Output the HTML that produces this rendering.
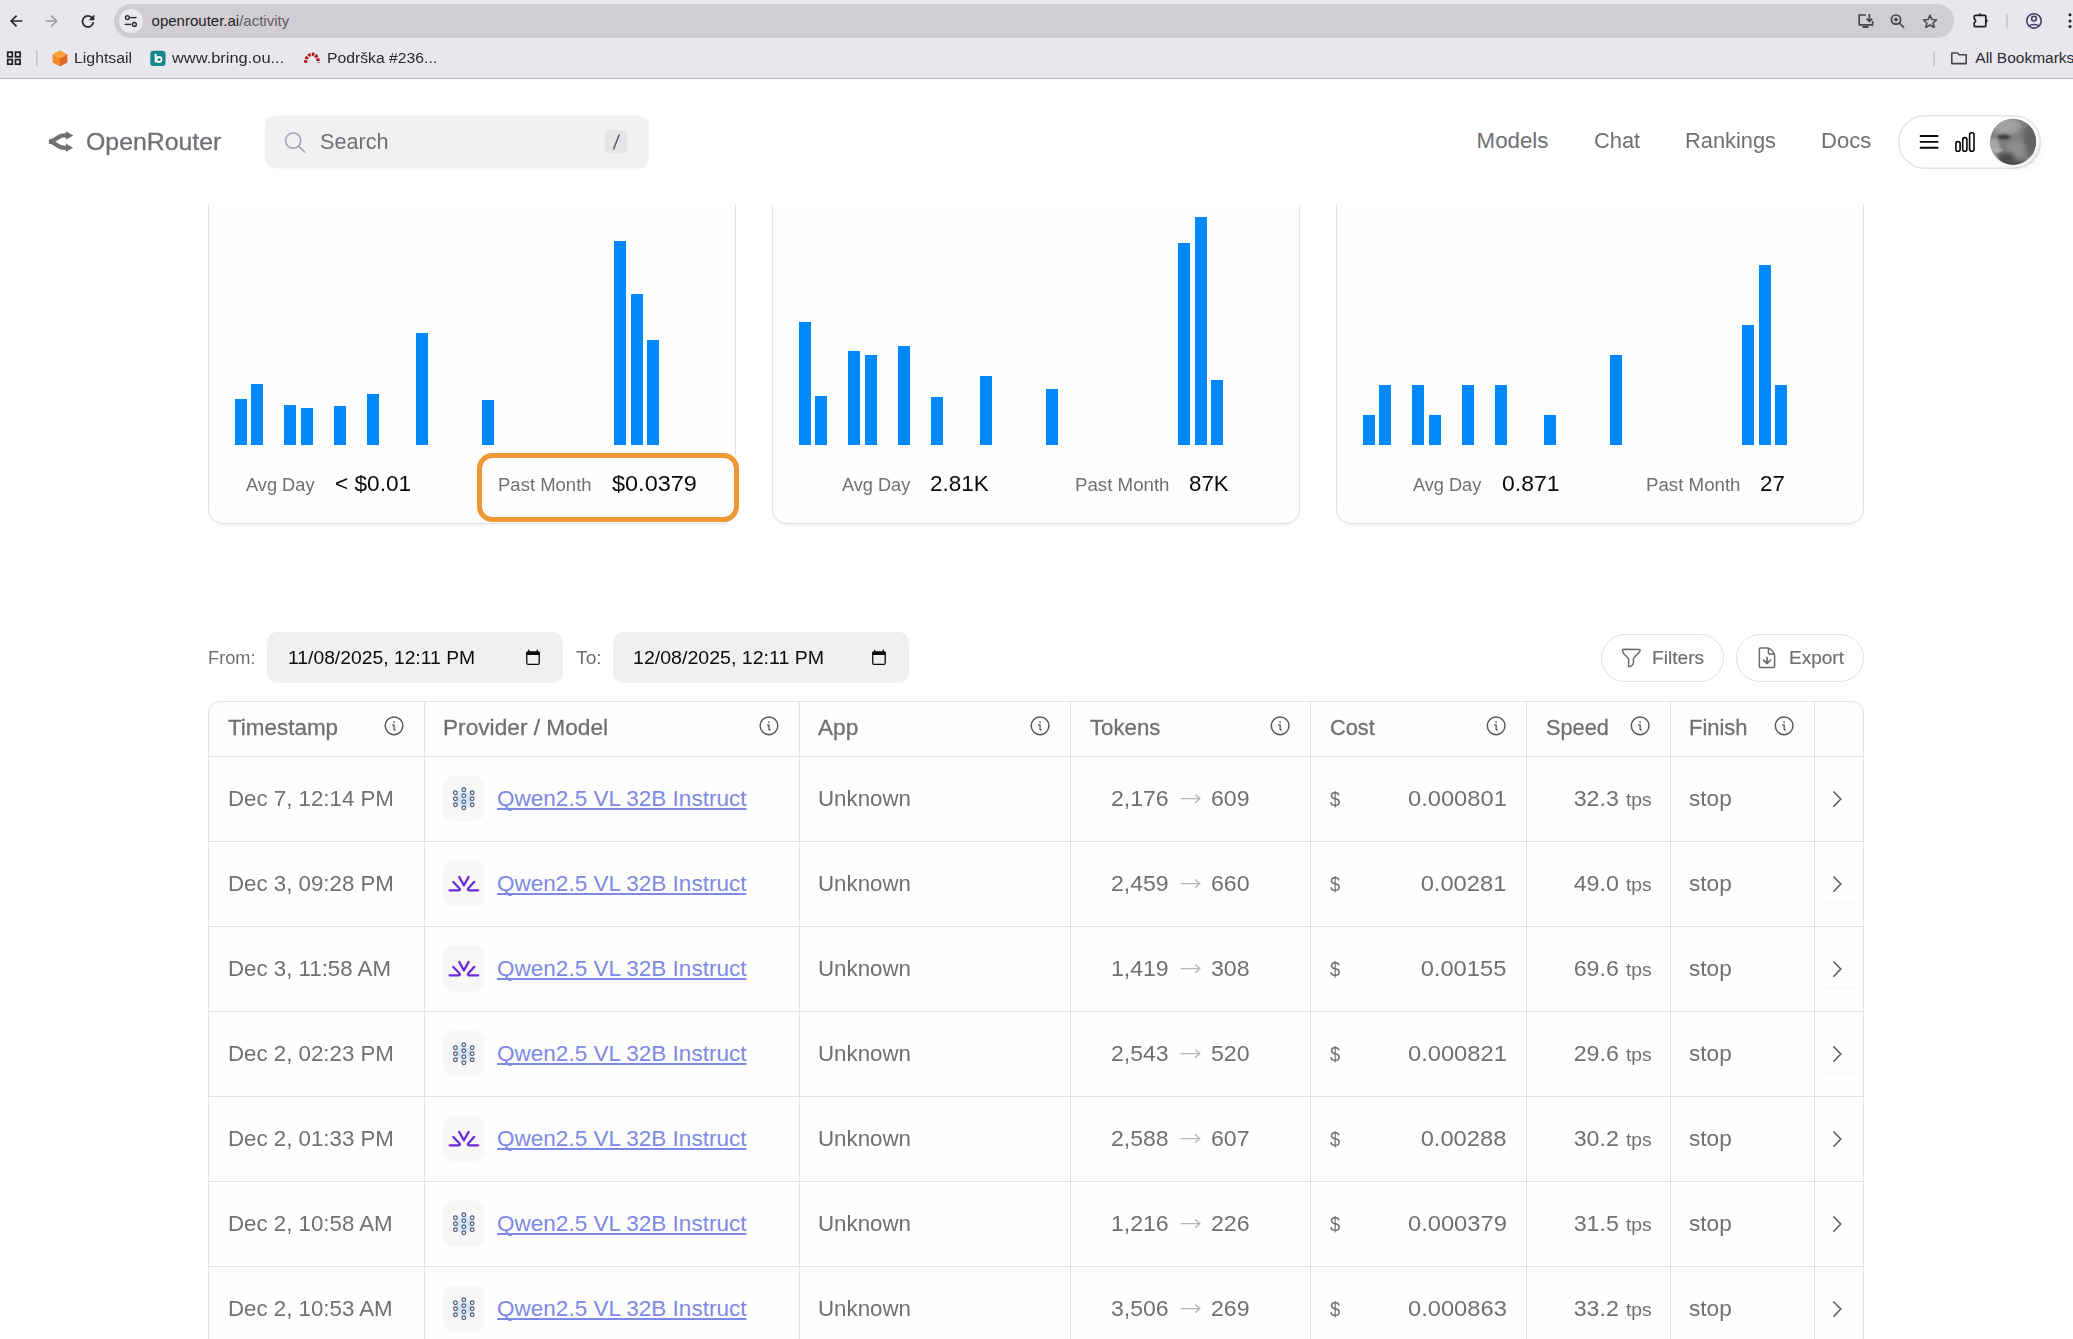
<!DOCTYPE html>
<html><head><meta charset="utf-8"><title>OpenRouter Activity</title>
<style>
*{box-sizing:border-box;margin:0;padding:0}
html,body{width:2073px;height:1339px;overflow:hidden;background:#FFFFFF;font-family:"Liberation Sans",sans-serif}
body{position:relative}
.a{position:absolute;white-space:pre;line-height:1}
</style></head><body>
<div style="position:absolute;left:208px;top:140px;width:528px;height:384px;border:1px solid #E2E2E4;border-radius:15px;background:#FEFEFE;box-shadow:0 1.5px 2px rgba(0,0,0,0.04)"></div>
<div style="position:absolute;left:234.50px;top:399.0px;width:12px;height:45.8px;background:#0088FF"></div>
<div style="position:absolute;left:251.00px;top:383.8px;width:12px;height:61.0px;background:#0088FF"></div>
<div style="position:absolute;left:284.00px;top:405.0px;width:12px;height:39.8px;background:#0088FF"></div>
<div style="position:absolute;left:300.50px;top:408.0px;width:12px;height:36.8px;background:#0088FF"></div>
<div style="position:absolute;left:333.50px;top:405.6px;width:12px;height:39.2px;background:#0088FF"></div>
<div style="position:absolute;left:366.50px;top:394.3px;width:12px;height:50.5px;background:#0088FF"></div>
<div style="position:absolute;left:416.00px;top:333.0px;width:12px;height:111.8px;background:#0088FF"></div>
<div style="position:absolute;left:482.00px;top:400.0px;width:12px;height:44.8px;background:#0088FF"></div>
<div style="position:absolute;left:614.00px;top:240.9px;width:12px;height:203.9px;background:#0088FF"></div>
<div style="position:absolute;left:630.50px;top:294.0px;width:12px;height:150.8px;background:#0088FF"></div>
<div style="position:absolute;left:647.00px;top:340.4px;width:12px;height:104.4px;background:#0088FF"></div>
<div class="a" style="left:245.80px;top:476.14px;font-size:18.3px;color:#707074;transform:scaleX(0.9961);transform-origin:0 0;">Avg Day</div>
<div class="a" style="left:334.50px;top:472.70px;font-size:22px;color:#09090B;transform:scaleX(1.0295);transform-origin:0 0;">&lt; $0.01</div>
<div class="a" style="left:497.60px;top:476.14px;font-size:18.3px;color:#707074;transform:scaleX(1.0122);transform-origin:0 0;">Past Month</div>
<div class="a" style="left:611.50px;top:472.70px;font-size:22px;color:#09090B;transform:scaleX(1.0675);transform-origin:0 0;">$0.0379</div>
<div style="position:absolute;left:772px;top:140px;width:528px;height:384px;border:1px solid #E2E2E4;border-radius:15px;background:#FEFEFE;box-shadow:0 1.5px 2px rgba(0,0,0,0.04)"></div>
<div style="position:absolute;left:798.60px;top:321.8px;width:12px;height:123.0px;background:#0088FF"></div>
<div style="position:absolute;left:815.10px;top:396.0px;width:12px;height:48.8px;background:#0088FF"></div>
<div style="position:absolute;left:848.10px;top:351.3px;width:12px;height:93.5px;background:#0088FF"></div>
<div style="position:absolute;left:864.60px;top:355.0px;width:12px;height:89.8px;background:#0088FF"></div>
<div style="position:absolute;left:897.60px;top:346.0px;width:12px;height:98.8px;background:#0088FF"></div>
<div style="position:absolute;left:930.60px;top:396.6px;width:12px;height:48.2px;background:#0088FF"></div>
<div style="position:absolute;left:980.10px;top:375.8px;width:12px;height:69.0px;background:#0088FF"></div>
<div style="position:absolute;left:1046.10px;top:389.3px;width:12px;height:55.5px;background:#0088FF"></div>
<div style="position:absolute;left:1178.10px;top:243.2px;width:12px;height:201.6px;background:#0088FF"></div>
<div style="position:absolute;left:1194.60px;top:216.5px;width:12px;height:228.3px;background:#0088FF"></div>
<div style="position:absolute;left:1211.10px;top:380.4px;width:12px;height:64.4px;background:#0088FF"></div>
<div class="a" style="left:841.80px;top:476.14px;font-size:18.3px;color:#707074;transform:scaleX(0.9918);transform-origin:0 0;">Avg Day</div>
<div class="a" style="left:930.20px;top:472.70px;font-size:22px;color:#09090B;transform:scaleX(1.0226);transform-origin:0 0;">2.81K</div>
<div class="a" style="left:1074.70px;top:476.14px;font-size:18.3px;color:#707074;transform:scaleX(1.0220);transform-origin:0 0;">Past Month</div>
<div class="a" style="left:1189.00px;top:472.70px;font-size:22px;color:#09090B;transform:scaleX(1.0139);transform-origin:0 0;">87K</div>
<div style="position:absolute;left:1336px;top:140px;width:528px;height:384px;border:1px solid #E2E2E4;border-radius:15px;background:#FEFEFE;box-shadow:0 1.5px 2px rgba(0,0,0,0.04)"></div>
<div style="position:absolute;left:1362.70px;top:415.0px;width:12px;height:29.8px;background:#0088FF"></div>
<div style="position:absolute;left:1379.20px;top:385.0px;width:12px;height:59.8px;background:#0088FF"></div>
<div style="position:absolute;left:1412.20px;top:385.0px;width:12px;height:59.8px;background:#0088FF"></div>
<div style="position:absolute;left:1428.70px;top:415.0px;width:12px;height:29.8px;background:#0088FF"></div>
<div style="position:absolute;left:1461.70px;top:385.0px;width:12px;height:59.8px;background:#0088FF"></div>
<div style="position:absolute;left:1494.70px;top:385.0px;width:12px;height:59.8px;background:#0088FF"></div>
<div style="position:absolute;left:1544.20px;top:415.0px;width:12px;height:29.8px;background:#0088FF"></div>
<div style="position:absolute;left:1610.20px;top:355.0px;width:12px;height:89.8px;background:#0088FF"></div>
<div style="position:absolute;left:1742.20px;top:325.0px;width:12px;height:119.8px;background:#0088FF"></div>
<div style="position:absolute;left:1758.70px;top:265.0px;width:12px;height:179.8px;background:#0088FF"></div>
<div style="position:absolute;left:1775.20px;top:385.0px;width:12px;height:59.8px;background:#0088FF"></div>
<div class="a" style="left:1413.20px;top:476.14px;font-size:18.3px;color:#707074;transform:scaleX(0.9932);transform-origin:0 0;">Avg Day</div>
<div class="a" style="left:1501.50px;top:472.70px;font-size:22px;color:#09090B;transform:scaleX(1.0443);transform-origin:0 0;">0.871</div>
<div class="a" style="left:1645.50px;top:476.14px;font-size:18.3px;color:#707074;transform:scaleX(1.0220);transform-origin:0 0;">Past Month</div>
<div class="a" style="left:1759.80px;top:472.70px;font-size:22px;color:#09090B;transform:scaleX(1.0129);transform-origin:0 0;">27</div>
<div style="position:absolute;left:477px;top:453px;width:261.6px;height:69px;border:5.4px solid #EF9732;border-radius:15.5px;z-index:5"></div>
<div class="a" style="left:207.80px;top:648.85px;font-size:18.3px;color:#707074;transform:scaleX(0.9972);transform-origin:0 0;">From:</div>
<div class="a" style="left:575.70px;top:648.85px;font-size:18.3px;color:#707074;transform:scaleX(1.0537);transform-origin:0 0;">To:</div>
<div style="position:absolute;left:267px;top:632.2px;width:296.2px;height:50.6px;border-radius:10px;background:#F0F0F2"></div>
<div style="position:absolute;left:613.2px;top:632.2px;width:295.4px;height:50.6px;border-radius:10px;background:#F0F0F2"></div>
<div class="a" style="left:287.50px;top:649.20px;font-size:18px;color:#09090B;transform:scaleX(1.0724);transform-origin:0 0;">11/08/2025, 12:11 PM</div>
<div class="a" style="left:632.90px;top:649.20px;font-size:18px;color:#09090B;transform:scaleX(1.0870);transform-origin:0 0;">12/08/2025, 12:11 PM</div>
<div style="position:absolute;left:1600.5px;top:634.2px;width:123px;height:47.4px;border:1px solid #E2E2E4;border-radius:24px;background:#fff"></div>
<div style="position:absolute;left:1736.3px;top:634.2px;width:127.4px;height:47.4px;border:1px solid #E2E2E4;border-radius:24px;background:#fff"></div>
<div class="a" style="left:1652.40px;top:648.85px;font-size:18.3px;color:#707074;transform:scaleX(1.0469);transform-origin:0 0;-webkit-text-stroke:0.2px #71717A;">Filters</div>
<div class="a" style="left:1789.10px;top:648.85px;font-size:18.3px;color:#707074;transform:scaleX(1.0408);transform-origin:0 0;-webkit-text-stroke:0.2px #71717A;">Export</div>
<svg style="position:absolute;left:0;top:600px" width="2073" height="100" viewBox="0 600 2073 100" fill="none">
  <rect x="526.75" y="652.15" width="12.5" height="12.3" rx="1.5" stroke="#09090B" stroke-width="1.3"/>
  <rect x="526.1" y="651.5" width="13.8" height="3.4" rx="1.2" fill="#09090B"/>
  <rect x="528.0" y="649.6" width="1.3" height="2.4" rx="0.6" fill="#09090B"/>
  <rect x="536.7" y="649.6" width="1.3" height="2.4" rx="0.6" fill="#09090B"/>
  <rect x="872.75" y="652.15" width="12.5" height="12.3" rx="1.5" stroke="#09090B" stroke-width="1.3"/>
  <rect x="872.1" y="651.5" width="13.8" height="3.4" rx="1.2" fill="#09090B"/>
  <rect x="874.0" y="649.6" width="1.3" height="2.4" rx="0.6" fill="#09090B"/>
  <rect x="882.7" y="649.6" width="1.3" height="2.4" rx="0.6" fill="#09090B"/>
  <g stroke="#6A6A6E" stroke-width="1.5" stroke-linejoin="round" stroke-linecap="round">
    <path d="M1622.6 650.6 Q1622.3 649.4 1623.6 649.3 L1639.0 649.5 Q1640.6 649.7 1639.8 651.3 Q1639.2 652.4 1638 653.6 L1634.2 657.3 Q1633.4 658.3 1633.4 659.6 V662.6 Q1633.4 664.8 1631.6 665.7 L1629.6 666.6 Q1628.6 667 1628.6 665.9 V659.7 Q1628.6 658.6 1627.8 657.7 L1623.6 653.4 Q1622.9 652.4 1622.6 650.6 Z"/>
    <path d="M1760.4 648.1 H1768.3 Q1772.8 649.5 1774.6 655.2 V666.4 Q1774.6 667.4 1773.6 667.4 H1760.4 Q1759.4 667.4 1759.4 666.4 V649.1 Q1759.4 648.1 1760.4 648.1 Z"/>
    <path d="M1768.4 648.6 V652.9 Q1768.4 654.1 1769.6 654.1 H1774.2"/>
    <path d="M1767 657.3 V663.2 M1763.5 660.2 L1767 663.6 L1770.5 660.2" stroke-width="1.7"/>
  </g>
</svg>
<div style="position:absolute;left:208px;top:701px;width:1656px;height:720px;border:1px solid #E2E2E4;border-radius:12px;background:#FEFEFE"></div>
<div style="position:absolute;left:424px;top:702px;width:1px;height:640px;background:#E2E2E4"></div>
<div style="position:absolute;left:799px;top:702px;width:1px;height:640px;background:#E2E2E4"></div>
<div style="position:absolute;left:1070px;top:702px;width:1px;height:640px;background:#E2E2E4"></div>
<div style="position:absolute;left:1310px;top:702px;width:1px;height:640px;background:#E2E2E4"></div>
<div style="position:absolute;left:1526px;top:702px;width:1px;height:640px;background:#E2E2E4"></div>
<div style="position:absolute;left:1670px;top:702px;width:1px;height:640px;background:#E2E2E4"></div>
<div style="position:absolute;left:1814px;top:702px;width:1px;height:640px;background:#E2E2E4"></div>
<div style="position:absolute;left:209px;top:756px;width:1654px;height:1px;background:#E2E2E4"></div>
<div style="position:absolute;left:209px;top:841px;width:1654px;height:1px;background:#E2E2E4"></div>
<div style="position:absolute;left:209px;top:926px;width:1654px;height:1px;background:#E2E2E4"></div>
<div style="position:absolute;left:209px;top:1011px;width:1654px;height:1px;background:#E2E2E4"></div>
<div style="position:absolute;left:209px;top:1096px;width:1654px;height:1px;background:#E2E2E4"></div>
<div style="position:absolute;left:209px;top:1181px;width:1654px;height:1px;background:#E2E2E4"></div>
<div style="position:absolute;left:209px;top:1266px;width:1654px;height:1px;background:#E2E2E4"></div>
<div style="position:absolute;left:209px;top:1351px;width:1654px;height:1px;background:#E2E2E4"></div>
<svg style="position:absolute;left:0;top:700px" width="2073" height="639" viewBox="0 700 2073 639" fill="none"><circle cx="394.05" cy="725.8" r="8.85" stroke="#555559" stroke-width="1.45"/><path d="M392.75 725.0 H394.05 V729.1 Q394.05 730.2 395.35 729.8" stroke="#555559" stroke-width="1.3" stroke-linecap="round" stroke-linejoin="round"/><circle cx="394.05" cy="722.1" r="0.85" fill="#555559"/><circle cx="768.95" cy="725.8" r="8.85" stroke="#555559" stroke-width="1.45"/><path d="M767.65 725.0 H768.95 V729.1 Q768.95 730.2 770.25 729.8" stroke="#555559" stroke-width="1.3" stroke-linecap="round" stroke-linejoin="round"/><circle cx="768.95" cy="722.1" r="0.85" fill="#555559"/><circle cx="1040.05" cy="725.8" r="8.85" stroke="#555559" stroke-width="1.45"/><path d="M1038.75 725.0 H1040.05 V729.1 Q1040.05 730.2 1041.35 729.8" stroke="#555559" stroke-width="1.3" stroke-linecap="round" stroke-linejoin="round"/><circle cx="1040.05" cy="722.1" r="0.85" fill="#555559"/><circle cx="1280.15" cy="725.8" r="8.85" stroke="#555559" stroke-width="1.45"/><path d="M1278.85 725.0 H1280.15 V729.1 Q1280.15 730.2 1281.45 729.8" stroke="#555559" stroke-width="1.3" stroke-linecap="round" stroke-linejoin="round"/><circle cx="1280.15" cy="722.1" r="0.85" fill="#555559"/><circle cx="1496.15" cy="725.8" r="8.85" stroke="#555559" stroke-width="1.45"/><path d="M1494.85 725.0 H1496.15 V729.1 Q1496.15 730.2 1497.45 729.8" stroke="#555559" stroke-width="1.3" stroke-linecap="round" stroke-linejoin="round"/><circle cx="1496.15" cy="722.1" r="0.85" fill="#555559"/><circle cx="1640.15" cy="725.8" r="8.85" stroke="#555559" stroke-width="1.45"/><path d="M1638.85 725.0 H1640.15 V729.1 Q1640.15 730.2 1641.45 729.8" stroke="#555559" stroke-width="1.3" stroke-linecap="round" stroke-linejoin="round"/><circle cx="1640.15" cy="722.1" r="0.85" fill="#555559"/><circle cx="1784.15" cy="725.8" r="8.85" stroke="#555559" stroke-width="1.45"/><path d="M1782.85 725.0 H1784.15 V729.1 Q1784.15 730.2 1785.45 729.8" stroke="#555559" stroke-width="1.3" stroke-linecap="round" stroke-linejoin="round"/><circle cx="1784.15" cy="722.1" r="0.85" fill="#555559"/><rect x="443" y="775.4" width="41.6" height="46" rx="11" fill="#F7F7F8"/><path d="M455.4 792.8 L463.8 789.8 M455.4 792.8 L463.8 795.8 M455.4 792.8 L463.8 801.8 M455.4 792.8 L463.8 807.8 M455.4 798.8 L463.8 789.8 M455.4 798.8 L463.8 795.8 M455.4 798.8 L463.8 801.8 M455.4 798.8 L463.8 807.8 M455.4 804.8 L463.8 789.8 M455.4 804.8 L463.8 795.8 M455.4 804.8 L463.8 801.8 M455.4 804.8 L463.8 807.8 M463.8 789.8 L472.2 792.8 M463.8 789.8 L472.2 798.8 M463.8 789.8 L472.2 804.8 M463.8 795.8 L472.2 792.8 M463.8 795.8 L472.2 798.8 M463.8 795.8 L472.2 804.8 M463.8 801.8 L472.2 792.8 M463.8 801.8 L472.2 798.8 M463.8 801.8 L472.2 804.8 M463.8 807.8 L472.2 792.8 M463.8 807.8 L472.2 798.8 M463.8 807.8 L472.2 804.8" stroke="#8CCDF0" stroke-width="0.55" opacity="0.75"/><circle cx="455.4" cy="792.8" r="1.85" fill="#F6F6F7" stroke="#55577A" stroke-width="1.2"/><circle cx="455.4" cy="798.8" r="1.85" fill="#F6F6F7" stroke="#55577A" stroke-width="1.2"/><circle cx="455.4" cy="804.8" r="1.85" fill="#F6F6F7" stroke="#55577A" stroke-width="1.2"/><circle cx="463.8" cy="789.8" r="1.85" fill="#F6F6F7" stroke="#55577A" stroke-width="1.2"/><circle cx="463.8" cy="795.8" r="1.85" fill="#F6F6F7" stroke="#55577A" stroke-width="1.2"/><circle cx="463.8" cy="801.8" r="1.85" fill="#F6F6F7" stroke="#55577A" stroke-width="1.2"/><circle cx="463.8" cy="807.8" r="1.85" fill="#F6F6F7" stroke="#55577A" stroke-width="1.2"/><circle cx="472.2" cy="792.8" r="1.85" fill="#F6F6F7" stroke="#55577A" stroke-width="1.2"/><circle cx="472.2" cy="798.8" r="1.85" fill="#F6F6F7" stroke="#55577A" stroke-width="1.2"/><circle cx="472.2" cy="804.8" r="1.85" fill="#F6F6F7" stroke="#55577A" stroke-width="1.2"/><path d="M1180.6 798.6 H1199.6 M1195.2 794.4 L1199.8 798.6 L1195.2 802.8" stroke="#B4B4BB" stroke-width="1.4"/><path d="M1833.4 791.4 L1840.8 799.1 L1833.4 806.8" stroke="#58585E" stroke-width="1.5"/><rect x="1821" y="817.5" width="35" height="1.2" fill="#F8F8F9"/><rect x="443" y="860.4" width="41.6" height="46" rx="11" fill="#F7F7F8"/><g transform="translate(0 0)" stroke="#6A2BDC" stroke-width="2.2" fill="none" stroke-linecap="round" stroke-linejoin="round"><path d="M459.2 876.9 L463.9 885.4 L468.6 876.9"/><path d="M453.3 881.9 L459.6 888.6 Q460.6 890.3 458.8 890.3 H449.6"/><path d="M474.3 881.8 L468.2 888.6 Q467.2 890.3 469 890.3 H478.2"/></g><path d="M1180.6 883.6 H1199.6 M1195.2 879.4 L1199.8 883.6 L1195.2 887.8" stroke="#B4B4BB" stroke-width="1.4"/><path d="M1833.4 876.4 L1840.8 884.1 L1833.4 891.8" stroke="#58585E" stroke-width="1.5"/><rect x="1821" y="902.5" width="35" height="1.2" fill="#F8F8F9"/><rect x="443" y="945.4" width="41.6" height="46" rx="11" fill="#F7F7F8"/><g transform="translate(0 85)" stroke="#6A2BDC" stroke-width="2.2" fill="none" stroke-linecap="round" stroke-linejoin="round"><path d="M459.2 876.9 L463.9 885.4 L468.6 876.9"/><path d="M453.3 881.9 L459.6 888.6 Q460.6 890.3 458.8 890.3 H449.6"/><path d="M474.3 881.8 L468.2 888.6 Q467.2 890.3 469 890.3 H478.2"/></g><path d="M1180.6 968.6 H1199.6 M1195.2 964.4 L1199.8 968.6 L1195.2 972.8" stroke="#B4B4BB" stroke-width="1.4"/><path d="M1833.4 961.4 L1840.8 969.1 L1833.4 976.8" stroke="#58585E" stroke-width="1.5"/><rect x="1821" y="987.5" width="35" height="1.2" fill="#F8F8F9"/><rect x="443" y="1030.4" width="41.6" height="46" rx="11" fill="#F7F7F8"/><path d="M455.4 1047.8 L463.8 1044.8 M455.4 1047.8 L463.8 1050.8 M455.4 1047.8 L463.8 1056.8 M455.4 1047.8 L463.8 1062.8 M455.4 1053.8 L463.8 1044.8 M455.4 1053.8 L463.8 1050.8 M455.4 1053.8 L463.8 1056.8 M455.4 1053.8 L463.8 1062.8 M455.4 1059.8 L463.8 1044.8 M455.4 1059.8 L463.8 1050.8 M455.4 1059.8 L463.8 1056.8 M455.4 1059.8 L463.8 1062.8 M463.8 1044.8 L472.2 1047.8 M463.8 1044.8 L472.2 1053.8 M463.8 1044.8 L472.2 1059.8 M463.8 1050.8 L472.2 1047.8 M463.8 1050.8 L472.2 1053.8 M463.8 1050.8 L472.2 1059.8 M463.8 1056.8 L472.2 1047.8 M463.8 1056.8 L472.2 1053.8 M463.8 1056.8 L472.2 1059.8 M463.8 1062.8 L472.2 1047.8 M463.8 1062.8 L472.2 1053.8 M463.8 1062.8 L472.2 1059.8" stroke="#8CCDF0" stroke-width="0.55" opacity="0.75"/><circle cx="455.4" cy="1047.8" r="1.85" fill="#F6F6F7" stroke="#55577A" stroke-width="1.2"/><circle cx="455.4" cy="1053.8" r="1.85" fill="#F6F6F7" stroke="#55577A" stroke-width="1.2"/><circle cx="455.4" cy="1059.8" r="1.85" fill="#F6F6F7" stroke="#55577A" stroke-width="1.2"/><circle cx="463.8" cy="1044.8" r="1.85" fill="#F6F6F7" stroke="#55577A" stroke-width="1.2"/><circle cx="463.8" cy="1050.8" r="1.85" fill="#F6F6F7" stroke="#55577A" stroke-width="1.2"/><circle cx="463.8" cy="1056.8" r="1.85" fill="#F6F6F7" stroke="#55577A" stroke-width="1.2"/><circle cx="463.8" cy="1062.8" r="1.85" fill="#F6F6F7" stroke="#55577A" stroke-width="1.2"/><circle cx="472.2" cy="1047.8" r="1.85" fill="#F6F6F7" stroke="#55577A" stroke-width="1.2"/><circle cx="472.2" cy="1053.8" r="1.85" fill="#F6F6F7" stroke="#55577A" stroke-width="1.2"/><circle cx="472.2" cy="1059.8" r="1.85" fill="#F6F6F7" stroke="#55577A" stroke-width="1.2"/><path d="M1180.6 1053.6 H1199.6 M1195.2 1049.4 L1199.8 1053.6 L1195.2 1057.8" stroke="#B4B4BB" stroke-width="1.4"/><path d="M1833.4 1046.4 L1840.8 1054.1 L1833.4 1061.8" stroke="#58585E" stroke-width="1.5"/><rect x="1821" y="1072.5" width="35" height="1.2" fill="#F8F8F9"/><rect x="443" y="1115.4" width="41.6" height="46" rx="11" fill="#F7F7F8"/><g transform="translate(0 255)" stroke="#6A2BDC" stroke-width="2.2" fill="none" stroke-linecap="round" stroke-linejoin="round"><path d="M459.2 876.9 L463.9 885.4 L468.6 876.9"/><path d="M453.3 881.9 L459.6 888.6 Q460.6 890.3 458.8 890.3 H449.6"/><path d="M474.3 881.8 L468.2 888.6 Q467.2 890.3 469 890.3 H478.2"/></g><path d="M1180.6 1138.6 H1199.6 M1195.2 1134.4 L1199.8 1138.6 L1195.2 1142.8" stroke="#B4B4BB" stroke-width="1.4"/><path d="M1833.4 1131.4 L1840.8 1139.1 L1833.4 1146.8" stroke="#58585E" stroke-width="1.5"/><rect x="1821" y="1157.5" width="35" height="1.2" fill="#F8F8F9"/><rect x="443" y="1200.4" width="41.6" height="46" rx="11" fill="#F7F7F8"/><path d="M455.4 1217.8 L463.8 1214.8 M455.4 1217.8 L463.8 1220.8 M455.4 1217.8 L463.8 1226.8 M455.4 1217.8 L463.8 1232.8 M455.4 1223.8 L463.8 1214.8 M455.4 1223.8 L463.8 1220.8 M455.4 1223.8 L463.8 1226.8 M455.4 1223.8 L463.8 1232.8 M455.4 1229.8 L463.8 1214.8 M455.4 1229.8 L463.8 1220.8 M455.4 1229.8 L463.8 1226.8 M455.4 1229.8 L463.8 1232.8 M463.8 1214.8 L472.2 1217.8 M463.8 1214.8 L472.2 1223.8 M463.8 1214.8 L472.2 1229.8 M463.8 1220.8 L472.2 1217.8 M463.8 1220.8 L472.2 1223.8 M463.8 1220.8 L472.2 1229.8 M463.8 1226.8 L472.2 1217.8 M463.8 1226.8 L472.2 1223.8 M463.8 1226.8 L472.2 1229.8 M463.8 1232.8 L472.2 1217.8 M463.8 1232.8 L472.2 1223.8 M463.8 1232.8 L472.2 1229.8" stroke="#8CCDF0" stroke-width="0.55" opacity="0.75"/><circle cx="455.4" cy="1217.8" r="1.85" fill="#F6F6F7" stroke="#55577A" stroke-width="1.2"/><circle cx="455.4" cy="1223.8" r="1.85" fill="#F6F6F7" stroke="#55577A" stroke-width="1.2"/><circle cx="455.4" cy="1229.8" r="1.85" fill="#F6F6F7" stroke="#55577A" stroke-width="1.2"/><circle cx="463.8" cy="1214.8" r="1.85" fill="#F6F6F7" stroke="#55577A" stroke-width="1.2"/><circle cx="463.8" cy="1220.8" r="1.85" fill="#F6F6F7" stroke="#55577A" stroke-width="1.2"/><circle cx="463.8" cy="1226.8" r="1.85" fill="#F6F6F7" stroke="#55577A" stroke-width="1.2"/><circle cx="463.8" cy="1232.8" r="1.85" fill="#F6F6F7" stroke="#55577A" stroke-width="1.2"/><circle cx="472.2" cy="1217.8" r="1.85" fill="#F6F6F7" stroke="#55577A" stroke-width="1.2"/><circle cx="472.2" cy="1223.8" r="1.85" fill="#F6F6F7" stroke="#55577A" stroke-width="1.2"/><circle cx="472.2" cy="1229.8" r="1.85" fill="#F6F6F7" stroke="#55577A" stroke-width="1.2"/><path d="M1180.6 1223.6 H1199.6 M1195.2 1219.4 L1199.8 1223.6 L1195.2 1227.8" stroke="#B4B4BB" stroke-width="1.4"/><path d="M1833.4 1216.4 L1840.8 1224.1 L1833.4 1231.8" stroke="#58585E" stroke-width="1.5"/><rect x="1821" y="1242.5" width="35" height="1.2" fill="#F8F8F9"/><rect x="443" y="1285.4" width="41.6" height="46" rx="11" fill="#F7F7F8"/><path d="M455.4 1302.8 L463.8 1299.8 M455.4 1302.8 L463.8 1305.8 M455.4 1302.8 L463.8 1311.8 M455.4 1302.8 L463.8 1317.8 M455.4 1308.8 L463.8 1299.8 M455.4 1308.8 L463.8 1305.8 M455.4 1308.8 L463.8 1311.8 M455.4 1308.8 L463.8 1317.8 M455.4 1314.8 L463.8 1299.8 M455.4 1314.8 L463.8 1305.8 M455.4 1314.8 L463.8 1311.8 M455.4 1314.8 L463.8 1317.8 M463.8 1299.8 L472.2 1302.8 M463.8 1299.8 L472.2 1308.8 M463.8 1299.8 L472.2 1314.8 M463.8 1305.8 L472.2 1302.8 M463.8 1305.8 L472.2 1308.8 M463.8 1305.8 L472.2 1314.8 M463.8 1311.8 L472.2 1302.8 M463.8 1311.8 L472.2 1308.8 M463.8 1311.8 L472.2 1314.8 M463.8 1317.8 L472.2 1302.8 M463.8 1317.8 L472.2 1308.8 M463.8 1317.8 L472.2 1314.8" stroke="#8CCDF0" stroke-width="0.55" opacity="0.75"/><circle cx="455.4" cy="1302.8" r="1.85" fill="#F6F6F7" stroke="#55577A" stroke-width="1.2"/><circle cx="455.4" cy="1308.8" r="1.85" fill="#F6F6F7" stroke="#55577A" stroke-width="1.2"/><circle cx="455.4" cy="1314.8" r="1.85" fill="#F6F6F7" stroke="#55577A" stroke-width="1.2"/><circle cx="463.8" cy="1299.8" r="1.85" fill="#F6F6F7" stroke="#55577A" stroke-width="1.2"/><circle cx="463.8" cy="1305.8" r="1.85" fill="#F6F6F7" stroke="#55577A" stroke-width="1.2"/><circle cx="463.8" cy="1311.8" r="1.85" fill="#F6F6F7" stroke="#55577A" stroke-width="1.2"/><circle cx="463.8" cy="1317.8" r="1.85" fill="#F6F6F7" stroke="#55577A" stroke-width="1.2"/><circle cx="472.2" cy="1302.8" r="1.85" fill="#F6F6F7" stroke="#55577A" stroke-width="1.2"/><circle cx="472.2" cy="1308.8" r="1.85" fill="#F6F6F7" stroke="#55577A" stroke-width="1.2"/><circle cx="472.2" cy="1314.8" r="1.85" fill="#F6F6F7" stroke="#55577A" stroke-width="1.2"/><path d="M1180.6 1308.6 H1199.6 M1195.2 1304.4 L1199.8 1308.6 L1195.2 1312.8" stroke="#B4B4BB" stroke-width="1.4"/><path d="M1833.4 1301.4 L1840.8 1309.1 L1833.4 1316.8" stroke="#58585E" stroke-width="1.5"/><rect x="1821" y="1327.5" width="35" height="1.2" fill="#F8F8F9"/></svg>
<div class="a" style="left:227.50px;top:717.40px;font-size:22px;color:#707074;transform:scaleX(1.0196);transform-origin:0 0;-webkit-text-stroke:0.3px #707074;">Timestamp</div>
<div class="a" style="left:443.20px;top:717.40px;font-size:22px;color:#707074;transform:scaleX(1.0307);transform-origin:0 0;-webkit-text-stroke:0.3px #707074;">Provider / Model</div>
<div class="a" style="left:818.40px;top:717.40px;font-size:22px;color:#707074;transform:scaleX(1.0292);transform-origin:0 0;-webkit-text-stroke:0.3px #707074;">App</div>
<div class="a" style="left:1089.50px;top:717.40px;font-size:22px;color:#707074;transform:scaleX(1.0098);transform-origin:0 0;-webkit-text-stroke:0.3px #707074;">Tokens</div>
<div class="a" style="left:1329.70px;top:717.40px;font-size:22px;color:#707074;transform:scaleX(0.9901);transform-origin:0 0;-webkit-text-stroke:0.3px #707074;">Cost</div>
<div class="a" style="left:1545.80px;top:717.40px;font-size:22px;color:#707074;transform:scaleX(0.9870);transform-origin:0 0;-webkit-text-stroke:0.3px #707074;">Speed</div>
<div class="a" style="left:1689.00px;top:717.40px;font-size:22px;color:#707074;transform:scaleX(0.9968);transform-origin:0 0;-webkit-text-stroke:0.3px #707074;">Finish</div>
<div class="a" style="left:227.50px;top:787.88px;font-size:22.5px;color:#707074;transform:scaleX(0.9899);transform-origin:0 0;">Dec 7, 12:14 PM</div>
<div class="a" style="left:497.10px;top:787.88px;font-size:22.5px;color:#7D89E4;text-decoration:underline;text-decoration-thickness:1.6px;text-underline-offset:1.6px;text-decoration-skip-ink:none;">Qwen2.5 VL 32B Instruct</div>
<div class="a" style="left:818.40px;top:787.88px;font-size:22.5px;color:#707074;transform:scaleX(0.9913);transform-origin:0 0;">Unknown</div>
<div class="a" style="left:1110.80px;top:787.88px;font-size:22.5px;color:#707074;transform:scaleX(1.0246);transform-origin:0 0;">2,176</div>
<div class="a" style="left:1211.40px;top:787.88px;font-size:22.5px;color:#707074;transform:scaleX(1.0280);transform-origin:0 0;">609</div>
<div class="a" style="left:1329.70px;top:790.42px;font-size:19.5px;color:#707074;transform:scaleX(0.9393);transform-origin:0 0;">$</div>
<div class="a" style="left:1412.54px;top:787.88px;font-size:22.5px;color:#707074;transform:scaleX(1.0537);transform-origin:100% 0;">0.000801</div>
<div class="a" style="left:1574.70px;top:787.88px;font-size:22.5px;color:#707074;transform:scaleX(1.0298);transform-origin:100% 0;">32.3</div>
<div class="a" style="left:1625.80px;top:792.12px;font-size:17.5px;color:#707074;transform:scaleX(1.1002);transform-origin:0 0;">tps</div>
<div class="a" style="left:1689.00px;top:787.88px;font-size:22.5px;color:#707074;transform:scaleX(1.0040);transform-origin:0 0;">stop</div>
<div class="a" style="left:227.50px;top:872.88px;font-size:22.5px;color:#707074;transform:scaleX(0.9899);transform-origin:0 0;">Dec 3, 09:28 PM</div>
<div class="a" style="left:497.10px;top:872.88px;font-size:22.5px;color:#7D89E4;text-decoration:underline;text-decoration-thickness:1.6px;text-underline-offset:1.6px;text-decoration-skip-ink:none;">Qwen2.5 VL 32B Instruct</div>
<div class="a" style="left:818.40px;top:872.88px;font-size:22.5px;color:#707074;transform:scaleX(0.9913);transform-origin:0 0;">Unknown</div>
<div class="a" style="left:1110.80px;top:872.88px;font-size:22.5px;color:#707074;transform:scaleX(1.0246);transform-origin:0 0;">2,459</div>
<div class="a" style="left:1211.40px;top:872.88px;font-size:22.5px;color:#707074;transform:scaleX(1.0280);transform-origin:0 0;">660</div>
<div class="a" style="left:1329.70px;top:875.42px;font-size:19.5px;color:#707074;transform:scaleX(0.9393);transform-origin:0 0;">$</div>
<div class="a" style="left:1425.06px;top:872.88px;font-size:22.5px;color:#707074;transform:scaleX(1.0537);transform-origin:100% 0;">0.00281</div>
<div class="a" style="left:1574.70px;top:872.88px;font-size:22.5px;color:#707074;transform:scaleX(1.0298);transform-origin:100% 0;">49.0</div>
<div class="a" style="left:1625.80px;top:877.12px;font-size:17.5px;color:#707074;transform:scaleX(1.1002);transform-origin:0 0;">tps</div>
<div class="a" style="left:1689.00px;top:872.88px;font-size:22.5px;color:#707074;transform:scaleX(1.0040);transform-origin:0 0;">stop</div>
<div class="a" style="left:227.50px;top:957.88px;font-size:22.5px;color:#707074;transform:scaleX(0.9899);transform-origin:0 0;">Dec 3, 11:58 AM</div>
<div class="a" style="left:497.10px;top:957.88px;font-size:22.5px;color:#7D89E4;text-decoration:underline;text-decoration-thickness:1.6px;text-underline-offset:1.6px;text-decoration-skip-ink:none;">Qwen2.5 VL 32B Instruct</div>
<div class="a" style="left:818.40px;top:957.88px;font-size:22.5px;color:#707074;transform:scaleX(0.9913);transform-origin:0 0;">Unknown</div>
<div class="a" style="left:1110.80px;top:957.88px;font-size:22.5px;color:#707074;transform:scaleX(1.0246);transform-origin:0 0;">1,419</div>
<div class="a" style="left:1211.40px;top:957.88px;font-size:22.5px;color:#707074;transform:scaleX(1.0280);transform-origin:0 0;">308</div>
<div class="a" style="left:1329.70px;top:960.42px;font-size:19.5px;color:#707074;transform:scaleX(0.9393);transform-origin:0 0;">$</div>
<div class="a" style="left:1425.06px;top:957.88px;font-size:22.5px;color:#707074;transform:scaleX(1.0537);transform-origin:100% 0;">0.00155</div>
<div class="a" style="left:1574.70px;top:957.88px;font-size:22.5px;color:#707074;transform:scaleX(1.0298);transform-origin:100% 0;">69.6</div>
<div class="a" style="left:1625.80px;top:962.12px;font-size:17.5px;color:#707074;transform:scaleX(1.1002);transform-origin:0 0;">tps</div>
<div class="a" style="left:1689.00px;top:957.88px;font-size:22.5px;color:#707074;transform:scaleX(1.0040);transform-origin:0 0;">stop</div>
<div class="a" style="left:227.50px;top:1042.88px;font-size:22.5px;color:#707074;transform:scaleX(0.9899);transform-origin:0 0;">Dec 2, 02:23 PM</div>
<div class="a" style="left:497.10px;top:1042.88px;font-size:22.5px;color:#7D89E4;text-decoration:underline;text-decoration-thickness:1.6px;text-underline-offset:1.6px;text-decoration-skip-ink:none;">Qwen2.5 VL 32B Instruct</div>
<div class="a" style="left:818.40px;top:1042.88px;font-size:22.5px;color:#707074;transform:scaleX(0.9913);transform-origin:0 0;">Unknown</div>
<div class="a" style="left:1110.80px;top:1042.88px;font-size:22.5px;color:#707074;transform:scaleX(1.0246);transform-origin:0 0;">2,543</div>
<div class="a" style="left:1211.40px;top:1042.88px;font-size:22.5px;color:#707074;transform:scaleX(1.0280);transform-origin:0 0;">520</div>
<div class="a" style="left:1329.70px;top:1045.42px;font-size:19.5px;color:#707074;transform:scaleX(0.9393);transform-origin:0 0;">$</div>
<div class="a" style="left:1412.54px;top:1042.88px;font-size:22.5px;color:#707074;transform:scaleX(1.0537);transform-origin:100% 0;">0.000821</div>
<div class="a" style="left:1574.70px;top:1042.88px;font-size:22.5px;color:#707074;transform:scaleX(1.0298);transform-origin:100% 0;">29.6</div>
<div class="a" style="left:1625.80px;top:1047.12px;font-size:17.5px;color:#707074;transform:scaleX(1.1002);transform-origin:0 0;">tps</div>
<div class="a" style="left:1689.00px;top:1042.88px;font-size:22.5px;color:#707074;transform:scaleX(1.0040);transform-origin:0 0;">stop</div>
<div class="a" style="left:227.50px;top:1127.88px;font-size:22.5px;color:#707074;transform:scaleX(0.9899);transform-origin:0 0;">Dec 2, 01:33 PM</div>
<div class="a" style="left:497.10px;top:1127.88px;font-size:22.5px;color:#7D89E4;text-decoration:underline;text-decoration-thickness:1.6px;text-underline-offset:1.6px;text-decoration-skip-ink:none;">Qwen2.5 VL 32B Instruct</div>
<div class="a" style="left:818.40px;top:1127.88px;font-size:22.5px;color:#707074;transform:scaleX(0.9913);transform-origin:0 0;">Unknown</div>
<div class="a" style="left:1110.80px;top:1127.88px;font-size:22.5px;color:#707074;transform:scaleX(1.0246);transform-origin:0 0;">2,588</div>
<div class="a" style="left:1211.40px;top:1127.88px;font-size:22.5px;color:#707074;transform:scaleX(1.0280);transform-origin:0 0;">607</div>
<div class="a" style="left:1329.70px;top:1130.42px;font-size:19.5px;color:#707074;transform:scaleX(0.9393);transform-origin:0 0;">$</div>
<div class="a" style="left:1425.06px;top:1127.88px;font-size:22.5px;color:#707074;transform:scaleX(1.0537);transform-origin:100% 0;">0.00288</div>
<div class="a" style="left:1574.70px;top:1127.88px;font-size:22.5px;color:#707074;transform:scaleX(1.0298);transform-origin:100% 0;">30.2</div>
<div class="a" style="left:1625.80px;top:1132.12px;font-size:17.5px;color:#707074;transform:scaleX(1.1002);transform-origin:0 0;">tps</div>
<div class="a" style="left:1689.00px;top:1127.88px;font-size:22.5px;color:#707074;transform:scaleX(1.0040);transform-origin:0 0;">stop</div>
<div class="a" style="left:227.50px;top:1212.88px;font-size:22.5px;color:#707074;transform:scaleX(0.9899);transform-origin:0 0;">Dec 2, 10:58 AM</div>
<div class="a" style="left:497.10px;top:1212.88px;font-size:22.5px;color:#7D89E4;text-decoration:underline;text-decoration-thickness:1.6px;text-underline-offset:1.6px;text-decoration-skip-ink:none;">Qwen2.5 VL 32B Instruct</div>
<div class="a" style="left:818.40px;top:1212.88px;font-size:22.5px;color:#707074;transform:scaleX(0.9913);transform-origin:0 0;">Unknown</div>
<div class="a" style="left:1110.80px;top:1212.88px;font-size:22.5px;color:#707074;transform:scaleX(1.0246);transform-origin:0 0;">1,216</div>
<div class="a" style="left:1211.40px;top:1212.88px;font-size:22.5px;color:#707074;transform:scaleX(1.0280);transform-origin:0 0;">226</div>
<div class="a" style="left:1329.70px;top:1215.42px;font-size:19.5px;color:#707074;transform:scaleX(0.9393);transform-origin:0 0;">$</div>
<div class="a" style="left:1412.54px;top:1212.88px;font-size:22.5px;color:#707074;transform:scaleX(1.0537);transform-origin:100% 0;">0.000379</div>
<div class="a" style="left:1574.70px;top:1212.88px;font-size:22.5px;color:#707074;transform:scaleX(1.0298);transform-origin:100% 0;">31.5</div>
<div class="a" style="left:1625.80px;top:1217.12px;font-size:17.5px;color:#707074;transform:scaleX(1.1002);transform-origin:0 0;">tps</div>
<div class="a" style="left:1689.00px;top:1212.88px;font-size:22.5px;color:#707074;transform:scaleX(1.0040);transform-origin:0 0;">stop</div>
<div class="a" style="left:227.50px;top:1297.88px;font-size:22.5px;color:#707074;transform:scaleX(0.9899);transform-origin:0 0;">Dec 2, 10:53 AM</div>
<div class="a" style="left:497.10px;top:1297.88px;font-size:22.5px;color:#7D89E4;text-decoration:underline;text-decoration-thickness:1.6px;text-underline-offset:1.6px;text-decoration-skip-ink:none;">Qwen2.5 VL 32B Instruct</div>
<div class="a" style="left:818.40px;top:1297.88px;font-size:22.5px;color:#707074;transform:scaleX(0.9913);transform-origin:0 0;">Unknown</div>
<div class="a" style="left:1110.80px;top:1297.88px;font-size:22.5px;color:#707074;transform:scaleX(1.0246);transform-origin:0 0;">3,506</div>
<div class="a" style="left:1211.40px;top:1297.88px;font-size:22.5px;color:#707074;transform:scaleX(1.0280);transform-origin:0 0;">269</div>
<div class="a" style="left:1329.70px;top:1300.42px;font-size:19.5px;color:#707074;transform:scaleX(0.9393);transform-origin:0 0;">$</div>
<div class="a" style="left:1412.54px;top:1297.88px;font-size:22.5px;color:#707074;transform:scaleX(1.0537);transform-origin:100% 0;">0.000863</div>
<div class="a" style="left:1574.70px;top:1297.88px;font-size:22.5px;color:#707074;transform:scaleX(1.0298);transform-origin:100% 0;">33.2</div>
<div class="a" style="left:1625.80px;top:1302.12px;font-size:17.5px;color:#707074;transform:scaleX(1.1002);transform-origin:0 0;">tps</div>
<div class="a" style="left:1689.00px;top:1297.88px;font-size:22.5px;color:#707074;transform:scaleX(1.0040);transform-origin:0 0;">stop</div>
<div style="position:absolute;left:0;top:79px;width:2073px;height:126px;background:#FFFFFF;z-index:10"></div>
<div style="position:absolute;left:0;top:0;width:2073px;height:205px;z-index:11">
<svg style="position:absolute;left:0;top:0" width="2073" height="205" viewBox="0 0 2073 205" fill="none">
  <g transform="translate(48.9 129.74) scale(0.04766)" fill="#707074" stroke="#707074">
    <path d="M3 248.945C18 248.945 76 236 106 219C136 202 136 202 198 158C276.497 102.293 332 120.945 423 120.945" stroke-width="90" fill="none"/>
    <path d="M511 121.5L357.25 210.268L357.25 32.7324L511 121.5Z" stroke="none"/>
    <path d="M0 249C15 249 73 261.945 103 278.945C133 295.945 133 295.945 195 339.945C273.497 395.652 329 377 420 377" stroke-width="90" fill="none"/>
    <path d="M508 376.445L354.25 287.678L354.25 465.213L508 376.445Z" stroke="none"/>
  </g>
  <rect x="265" y="115.5" width="384" height="53" rx="10" fill="#F1F1F3"/>
  <circle cx="293.2" cy="140.6" r="7.6" stroke="#A1A1AA" stroke-width="1.6"/>
  <path d="M298.8 146.2 L304.6 152" stroke="#A1A1AA" stroke-width="1.6" stroke-linecap="round"/>
  <rect x="604.6" y="130.1" width="22.8" height="23.5" rx="5" fill="#E6E6E9"/>
  <path d="M619.3 134.4 L613.4 149.4" stroke="#5A5A60" stroke-width="1.5"/>
  <rect x="1898.75" y="115.75" width="141.5" height="52.5" rx="26.25" stroke="#E4E4E7" stroke-width="1.5" fill="#fff"/>
  <g stroke="#09090B" stroke-width="1.9" stroke-linecap="round">
    <path d="M1920.6 136 H1937.6 M1920.6 141.9 H1937.6 M1920.6 147.8 H1937.6"/>
  </g>
  <g stroke="#09090B" stroke-width="1.6" fill="none">
    <rect x="1955.9" y="141.6" width="4.2" height="9.6" rx="2"/>
    <rect x="1962.7" y="137.6" width="4.2" height="13.6" rx="2"/>
    <rect x="1969.6" y="132.8" width="4.4" height="18.4" rx="2"/>
  </g>
  <defs>
    <clipPath id="avc"><circle cx="2013.1" cy="141.8" r="23"/></clipPath>
    <filter id="b3" x="-50%" y="-50%" width="200%" height="200%"><feGaussianBlur stdDeviation="2.6"/></filter>
    <filter id="b1" x="-50%" y="-50%" width="200%" height="200%"><feGaussianBlur stdDeviation="1.1"/></filter>
    <filter id="sh" x="-50%" y="-50%" width="200%" height="200%"><feGaussianBlur stdDeviation="4"/></filter>
  </defs>
  <ellipse cx="2017" cy="148" rx="22" ry="20" fill="#000" opacity="0.07" filter="url(#sh)"/>
  <circle cx="2013.1" cy="141.8" r="23" fill="#7E7E7E"/>
  <g clip-path="url(#avc)">
    <ellipse cx="2006" cy="126" rx="15" ry="9" fill="#A2A2A2" filter="url(#b3)"/>
    <ellipse cx="2031" cy="140" rx="8" ry="16" fill="#626262" filter="url(#b3)"/>
    <ellipse cx="2016" cy="149" rx="9" ry="9" fill="#8E8E8E" filter="url(#b3)"/>
    <ellipse cx="1994" cy="146" rx="5" ry="8" fill="#A6A6A6" filter="url(#b1)"/>
    <ellipse cx="2004" cy="137" rx="6.5" ry="2.6" fill="#3C3C3C" filter="url(#b1)"/>
    <ellipse cx="1998" cy="150.5" rx="5" ry="2.2" fill="#B2B2B2" filter="url(#b1)"/>
    <ellipse cx="2006" cy="158" rx="9" ry="5" fill="#474747" filter="url(#b3)"/>
    <ellipse cx="2014" cy="167" rx="16" ry="5" fill="#2F2F2F" filter="url(#b3)"/>
    <ellipse cx="1994" cy="160" rx="4" ry="5" fill="#B5B5B5" filter="url(#b1)"/>
  </g>
</svg>
<div class="a" style="left:86.40px;top:131.15px;font-size:23px;color:#707074;transform:scaleX(1.0797);transform-origin:0 0;-webkit-text-stroke:0.3px #71717A;">OpenRouter</div>
<div class="a" style="left:319.80px;top:130.50px;font-size:22px;color:#707074;transform:scaleX(0.9840);transform-origin:0 0;">Search</div>
<div class="a" style="left:1476.60px;top:129.84px;font-size:22.3px;color:#707074;">Models</div>
<div class="a" style="left:1594.40px;top:129.84px;font-size:22.3px;color:#707074;transform:scaleX(0.9807);transform-origin:0 0;">Chat</div>
<div class="a" style="left:1685.00px;top:129.84px;font-size:22.3px;color:#707074;transform:scaleX(0.9788);transform-origin:0 0;">Rankings</div>
<div class="a" style="left:1821.00px;top:129.84px;font-size:22.3px;color:#707074;transform:scaleX(0.9919);transform-origin:0 0;">Docs</div>
</div>
<div style="position:absolute;left:0;top:0;width:2073px;height:79px;background:#E9E7EE;z-index:20">
<div style="position:absolute;left:0;top:78px;width:2073px;height:1px;background:#B9B7BE"></div>
<div style="position:absolute;left:114px;top:4px;width:1840px;height:34px;border-radius:17px;background:#D0CED4"></div>
<div style="position:absolute;left:118.5px;top:9px;width:24px;height:24px;border-radius:12px;background:#EBE9EF"></div>
<svg style="position:absolute;left:0;top:0" width="2073" height="79" viewBox="0 0 2073 79" fill="none">
  <g stroke="#2A2A2E" stroke-width="1.7" stroke-linecap="butt" stroke-linejoin="miter">
    <path d="M22.3 21 H11.5 M16.6 15.6 L11.2 21 L16.6 26.4"/>
  </g>
  <g stroke="#9E9CA3" stroke-width="1.7">
    <path d="M45.6 21 H56.4 M51.3 15.6 L56.7 21 L51.3 26.4"/>
  </g>
  <g stroke="#2A2A2E" stroke-width="1.7" fill="none">
    <path d="M92.4 18.2 A5.5 5.5 0 1 0 93.4 22.2"/>
  </g>
  <path d="M94.3 14.6 V20.2 H88.7 Z" fill="#2A2A2E"/>
  <g stroke="#2A2A2E" stroke-width="1.4" fill="none">
    <circle cx="127.4" cy="17.6" r="1.9"/>
    <path d="M130.2 17.6 H136.6"/>
    <path d="M124.6 24.4 H131.2"/>
    <circle cx="134.4" cy="24.4" r="1.9"/>
  </g>
  <g stroke="#47464C" stroke-width="1.7" fill="none">
    <path d="M1866 15 H1859.2 V24.8 H1872.6 V21"/>
    <path d="M1869.4 14 V21.2 M1866.6 18.6 L1869.4 21.4 L1872.2 18.6"/>
    <path d="M1862.5 27 H1868.5" stroke-width="2"/>
    <circle cx="1896" cy="19.6" r="4.6"/>
    <path d="M1899.3 23 L1904 27.6"/>
    <path d="M1896 17.4 V21.8 M1893.8 19.6 H1898.2" stroke-width="1.5"/>
    <path d="M1930 15.2 L1932 19.6 L1936.6 20 L1933.1 23 L1934.2 27.3 L1930 25 L1925.8 27.3 L1926.9 23 L1923.4 20 L1928 19.6 Z" stroke-width="1.5" stroke-linejoin="round"/>
  </g>
  <path d="M1975.6 15.3 H1984.9 Q1985.8 15.3 1985.8 16.2 V25.8 Q1985.8 26.6 1984.9 26.6 H1975.1 Q1974.2 26.6 1974.2 25.8 V22.9 Q1977.2 20.9 1974.2 18.7 V16.7 Q1974.2 15.3 1975.6 15.3 Z" stroke="#1F1F22" stroke-width="1.7" fill="none" stroke-linejoin="round"/>
  <path d="M1978.1 14.8 Q1979.9 11.6 1981.7 14.8 Z" fill="#1F1F22"/>
  <path d="M1986.2 19.0 Q1989.6 20.9 1986.2 22.8 Z" fill="#1F1F22"/>
  <rect x="2006.2" y="13.6" width="1.5" height="14.6" fill="#C5C3CA"/>
  <g stroke="#4B3D6A" stroke-width="1.6" fill="none">
    <circle cx="2034" cy="20.9" r="7.2"/>
    <circle cx="2034" cy="18.6" r="2.4"/>
    <path d="M2029.3 26.2 C2030.6 23.9 2037.4 23.9 2038.7 26.2"/>
  </g>
  <g fill="#1F1F22"><circle cx="2070" cy="14.8" r="1.5"/><circle cx="2070" cy="21" r="1.5"/><circle cx="2070" cy="26.6" r="1.5"/></g>
  <!-- bookmarks bar -->
  <g stroke="#1F1F22" stroke-width="1.7" fill="none">
    <rect x="7.7" y="52.2" width="4.6" height="4.6"/>
    <rect x="15.5" y="52.2" width="4.6" height="4.6"/>
    <rect x="7.7" y="59.6" width="4.6" height="4.6"/>
    <rect x="15.5" y="59.6" width="4.6" height="4.6"/>
  </g>
  <rect x="36" y="50" width="1.5" height="16" fill="#C5C3CA"/>
  <path d="M59.9 50.6 L67.2 54.4 V62.4 L59.9 66.2 L52.6 62.4 V54.4 Z" fill="#F08A24"/>
  <path d="M59.9 58.4 L67.2 54.4 V62.4 L59.9 66.2 Z" fill="#E2661F"/>
  <path d="M52.6 54.4 L59.9 50.6 L67.2 54.4 L59.9 58.4 Z" fill="#F9A23A"/>
  <rect x="150.3" y="50.8" width="15.2" height="15.2" rx="3.2" fill="#12888A"/>
  <path d="M155.6 53.8 V62.4" stroke="#fff" stroke-width="1.9"/><circle cx="159.0" cy="59.5" r="2.5" stroke="#fff" stroke-width="1.8" fill="none"/>
  <path d="M305.6 62.8 A6.4 8.6 0 0 1 318.4 62.8" stroke="#B5121B" stroke-width="3.2" stroke-dasharray="2.6 1.2" fill="none"/>
  <rect x="1933.3" y="51" width="1.5" height="15" fill="#C5C3CA"/>
  <path d="M1951.8 53 H1957.5 L1959.2 54.8 H1966.2 V63.6 H1951.8 Z" stroke="#47464C" stroke-width="1.6" fill="none" stroke-linejoin="round"/>
</svg>
<div class="a" style="left:151.60px;top:12.75px;font-size:15px;color:#1F1F22;">openrouter.ai<span style="color:#5F5D64">/activity</span></div>
<div class="a" style="left:74.30px;top:49.83px;font-size:15.5px;color:#2A2A2E;transform:scaleX(1.0215);transform-origin:0 0;">Lightsail</div>
<div class="a" style="left:172.20px;top:49.83px;font-size:15.5px;color:#2A2A2E;transform:scaleX(1.0588);transform-origin:0 0;">www.bring.ou...</div>
<div class="a" style="left:326.90px;top:49.53px;font-size:15.5px;color:#2A2A2E;transform:scaleX(1.0149);transform-origin:0 0;">Podrška #236...</div>
<div class="a" style="left:1975.30px;top:49.83px;font-size:15.5px;color:#2A2A2E;">All Bookmarks</div>
</div>
</body></html>
